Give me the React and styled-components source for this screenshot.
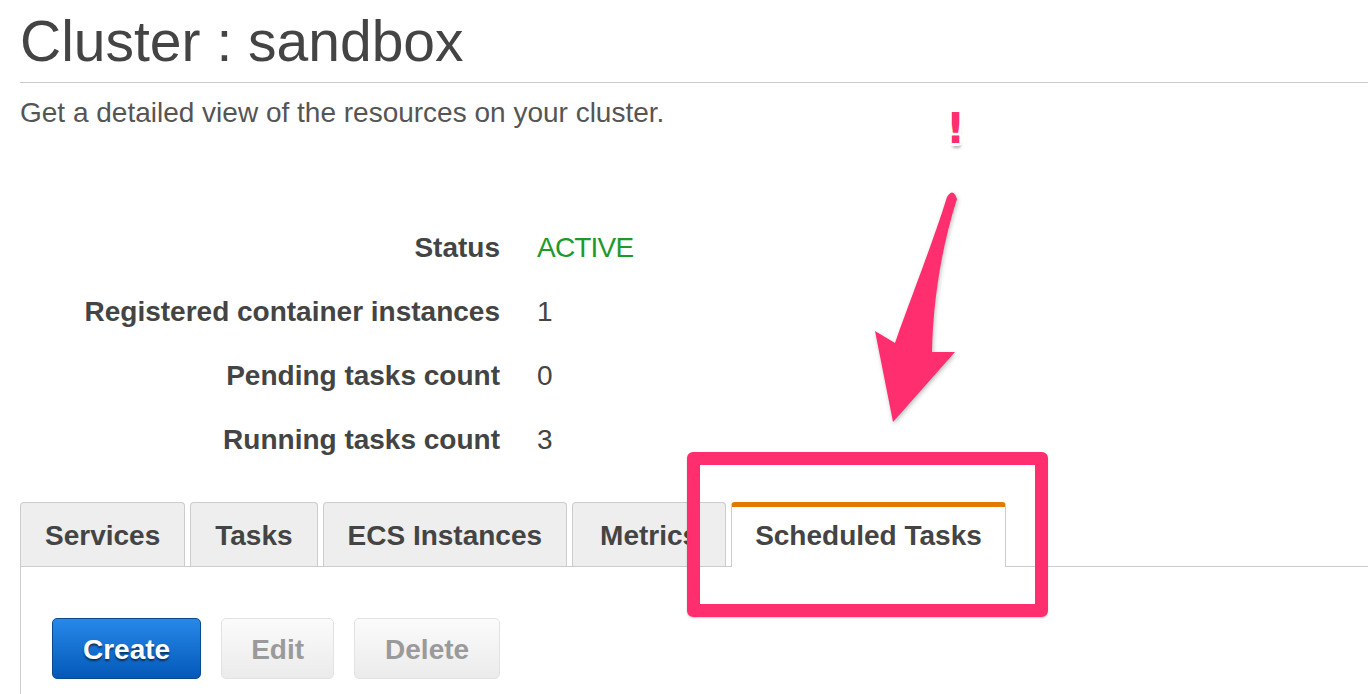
import React from 'react';
import styled, { createGlobalStyle } from 'styled-components';

const GlobalStyle = createGlobalStyle`
  html, body {
    margin: 0;
    padding: 0;
    overflow: hidden;
    background: #fff;
  }
  body {
    font-family: 'Liberation Sans', Arial, Helvetica, sans-serif;
    color: #444;
  }
`;

const palette = {
  text: '#444',
  muted: '#555',
  border: '#ccc',
  tabBg: '#eee',
  orange: '#e27a00',
  green: '#1e9a2a',
  pink: '#ff2e6e',
};

const Page = styled.div`
  position: relative;
  height: 694px;
  overflow: hidden;
`;

const Header = styled.h1`
  margin: 0 0 0 20px;
  padding: 9px 0 9px;
  font-size: 57px;
  line-height: 64px;
  font-weight: 400;
  color: ${palette.text};
  border-bottom: 1px solid ${palette.border};
`;

const Subtitle = styled.p`
  margin: 14px 0 0 20px;
  font-size: 28px;
  line-height: 32px;
  color: ${palette.muted};
`;

const InfoGrid = styled.dl`
  display: grid;
  grid-template-columns: 480px auto;
  column-gap: 37px;
  margin: 87px 0 0 20px;
  font-size: 28px;
  line-height: 64px;
`;

const InfoLabel = styled.dt`
  margin: 0;
  text-align: right;
  font-weight: 700;
  color: ${palette.text};
`;

const InfoValue = styled.dd`
  margin: 0;
  color: ${props => (props.status ? palette.green : palette.text)};
  letter-spacing: ${props => (props.status ? '-0.8px' : '0')};
`;

const TabBar = styled.div`
  display: flex;
  align-items: flex-end;
  gap: 5px;
  margin: 30px 0 0 20px;
  border-bottom: 1px solid ${palette.border};
`;

const Tab = styled.div`
  box-sizing: border-box;
  padding: ${props =>
    props.active ? `0 ${props.pad}px 2px` : `3px ${props.pad}px 0`};
  height: ${props => (props.active ? '65px' : '64px')};
  margin-bottom: ${props => (props.active ? '-1px' : '0')};
  line-height: ${props => (props.active ? '58px' : '60px')};
  font-size: 28px;
  font-weight: 700;
  color: ${palette.text};
  background: ${props => (props.active ? '#fff' : palette.tabBg)};
  border: 1px solid ${palette.border};
  border-bottom: none;
  border-top: ${props =>
    props.active ? `5px solid ${palette.orange}` : `1px solid ${palette.border}`};
  border-radius: 4px 4px 0 0;
  white-space: nowrap;
`;

const Panel = styled.div`
  margin-left: 20px;
  padding: 51px 0 0 31px;
  height: 300px;
  border-left: 1px solid ${palette.border};
`;

const ButtonRow = styled.div`
  display: flex;
  gap: 20px;
`;

const Button = styled.button`
  box-sizing: border-box;
  height: 61px;
  padding: 3px ${props => props.pad || 30}px 0;
  font-family: inherit;
  font-size: 28px;
  line-height: 56px;
  font-weight: 700;
  border-radius: 5px;
  border: 1px solid ${props => (props.primary ? '#0b4a8c' : '#e2e2e2')};
  color: ${props => (props.primary ? '#fff' : '#9a9a9a')};
  background: ${props =>
    props.primary
      ? 'linear-gradient(#2788ea, #0459b8)'
      : 'linear-gradient(#fbfbfb, #ebebeb)'};
  text-shadow: ${props =>
    props.primary ? '0 2px 2px rgba(0, 0, 0, 0.55)' : 'none'};
  cursor: ${props => (props.disabled ? 'default' : 'pointer')};
`;

const HighlightBox = styled.div`
  position: absolute;
  left: 687px;
  top: 452px;
  width: 361px;
  height: 165px;
  box-sizing: border-box;
  border: 13px solid ${palette.pink};
  border-radius: 6px;
  box-shadow: 0 1px 2px rgba(0, 0, 0, 0.2);
  pointer-events: none;
`;

const Exclaim = styled.span`
  position: absolute;
  left: 946px;
  top: 108px;
  font-family: 'DejaVu Sans', 'Liberation Sans', sans-serif;
  font-size: 42px;
  line-height: 42px;
  font-weight: 700;
  color: ${palette.pink};
  text-shadow: 3px 0 #fff, -3px 0 #fff, 0 3px #fff, 0 -3px #fff,
    2px 2px #fff, -2px -2px #fff, 2px -2px #fff, -2px 2px #fff,
    1px 5px 3px rgba(0, 0, 0, 0.3);
`;

const ArrowLayer = styled.svg`
  position: absolute;
  left: 0;
  top: 0;
  pointer-events: none;
  filter: drop-shadow(1px 2px 2px rgba(0, 0, 0, 0.25));
`;

const tabs = [
  { label: 'Services', pad: 24 },
  { label: 'Tasks', pad: 24 },
  { label: 'ECS Instances', pad: 24 },
  { label: 'Metrics', pad: 27 },
  { label: 'Scheduled Tasks', pad: 23, active: true },
];

const info = [
  { label: 'Status', value: 'ACTIVE', status: true },
  { label: 'Registered container instances', value: '1' },
  { label: 'Pending tasks count', value: '0' },
  { label: 'Running tasks count', value: '3' },
];

const App = () => {
  return (
    <Page>
      <GlobalStyle />
      <Header>Cluster : sandbox</Header>
      <Subtitle>Get a detailed view of the resources on your cluster.</Subtitle>

      <InfoGrid>
        {info.map(item => (
          <React.Fragment key={item.label}>
            <InfoLabel>{item.label}</InfoLabel>
            <InfoValue status={item.status}>{item.value}</InfoValue>
          </React.Fragment>
        ))}
      </InfoGrid>

      <TabBar>
        {tabs.map(tab => (
          <Tab key={tab.label} active={tab.active} pad={tab.pad}>
            {tab.label}
          </Tab>
        ))}
      </TabBar>

      <Panel>
        <ButtonRow>
          <Button primary>Create</Button>
          <Button disabled pad={29}>
            Edit
          </Button>
          <Button disabled>Delete</Button>
        </ButtonRow>
      </Panel>

      {/* annotation overlay */}
      <HighlightBox />
      <Exclaim>!</Exclaim>
      <ArrowLayer width='1368' height='694' viewBox='0 0 1368 694'>
        <path
          d='M 947 197 C 932 245, 910 300, 895 343 L 875 331 L 893 422 L 955 352 L 932 352 C 933 300, 942 245, 957 199 Q 953 187, 947 197 Z'
          fill={palette.pink}
        />
      </ArrowLayer>
    </Page>
  );
};

export default App;
